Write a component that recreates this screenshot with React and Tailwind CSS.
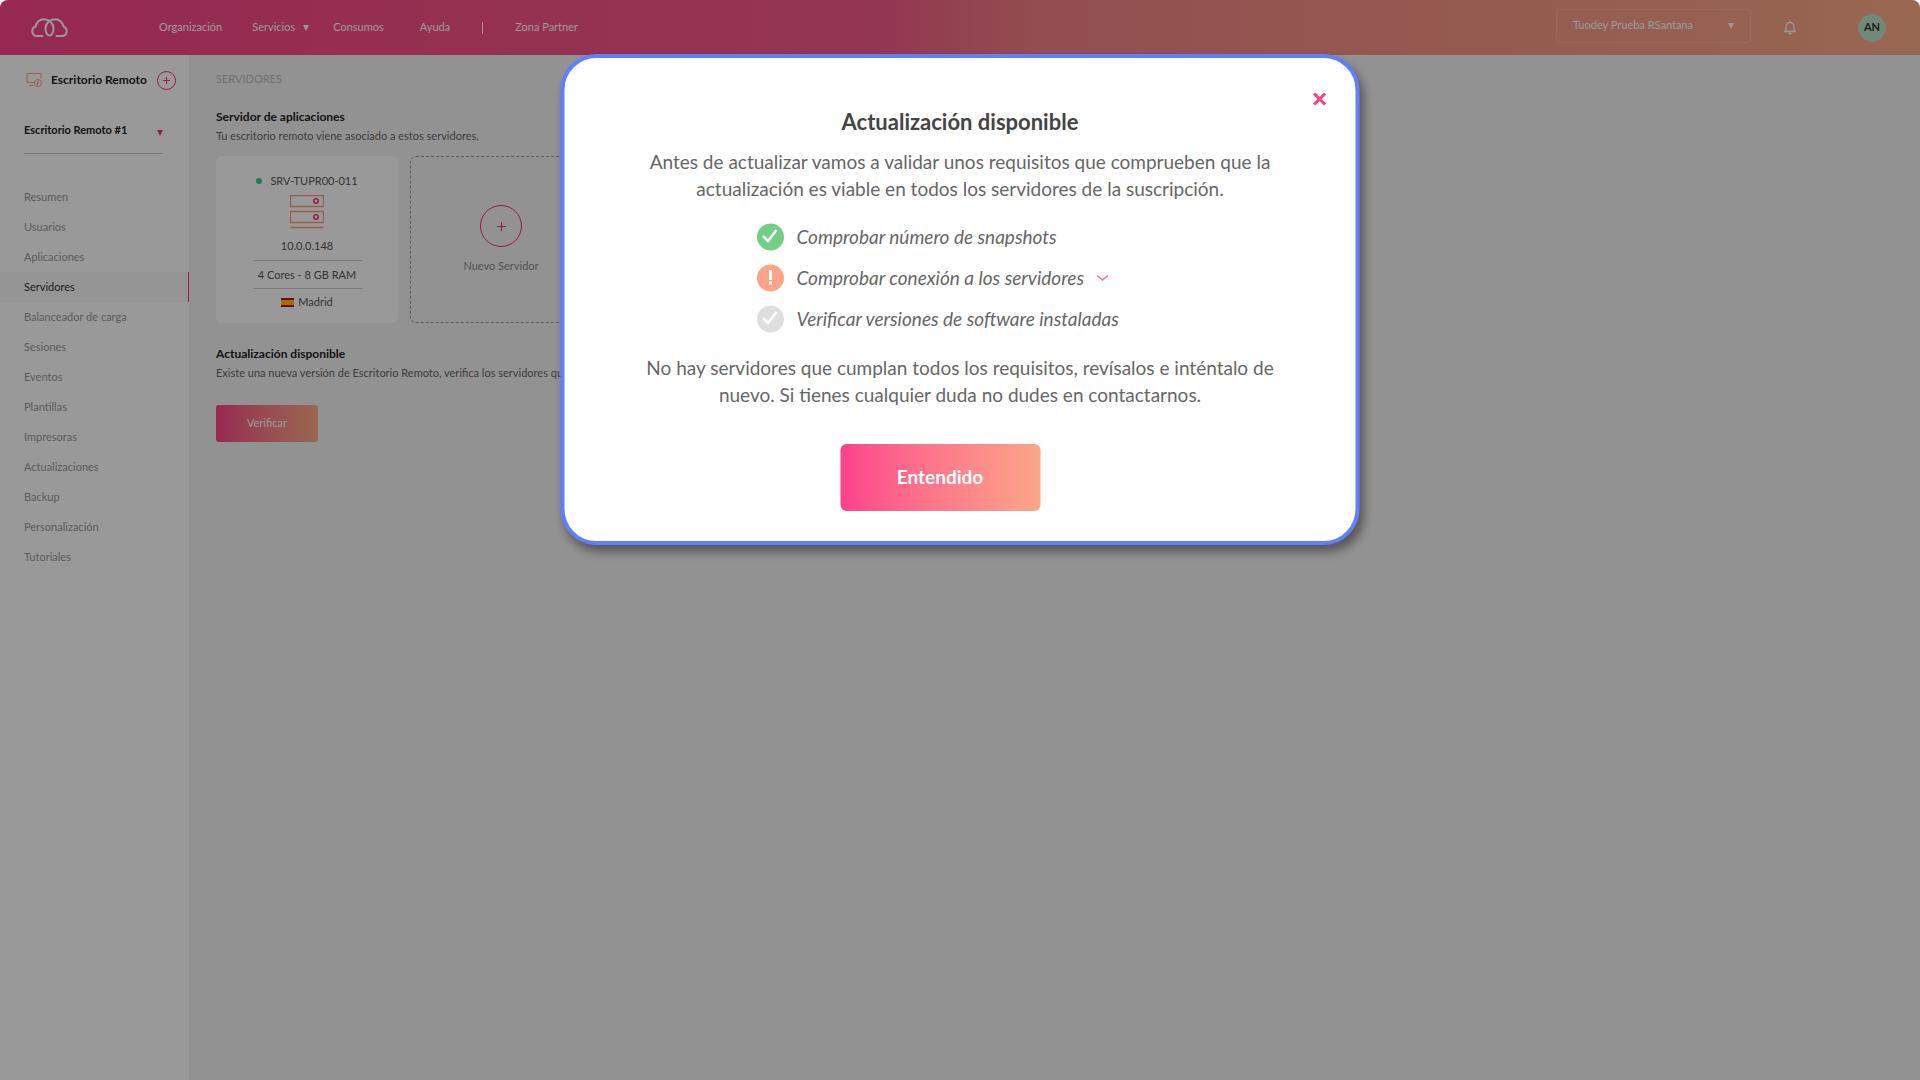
import clsx from 'clsx';

const NAV = [
  { label: 'Resumen' },
  { label: 'Usuarios' },
  { label: 'Aplicaciones' },
  { label: 'Servidores', active: true },
  { label: 'Balanceador de carga' },
  { label: 'Sesiones' },
  { label: 'Eventos' },
  { label: 'Plantillas' },
  { label: 'Impresoras' },
  { label: 'Actualizaciones' },
  { label: 'Backup' },
  { label: 'Personalización' },
  { label: 'Tutoriales' },
];

function Caret({ className }) {
  return (
    <svg viewBox="0 0 6 6" className={clsx('w-[6px] h-[6px] fill-current', className)}>
      <path d="M0 0h6L3 6z" />
    </svg>
  );
}

function CloudLogo() {
  return (
    <svg viewBox="0 0 39 20" className="w-[39px] h-5 fill-none stroke-white" strokeWidth="2" strokeLinecap="round">
      <path d="M12.500 18H6A5 5 0 0 1 5.500 8.500C6.500 4.500 9.500 1.500 14 1.300c5.500 0 9.500 4 9.500 9.200 0 4-1.800 7-4 7s-4-3-4-7c0-5.200 4-9.200 9.500-9.200 4.500.2 7.500 3.200 8.500 7.200A5 5 0 0 1 33 18H26.500" />
    </svg>
  );
}

function DesktopIcon() {
  return (
    <svg viewBox="0 0 17 15" className="w-[17px] h-[15px] fill-none stroke-[#fc9c84]">
      <path d="M9 9.500H1v-9h14v5M3 12.500h5" />
      <circle cx="12" cy="10" r="3.500" />
      <path d="M12 8v2l-1 2" className="stroke-[#fb6a8a]" />
    </svg>
  );
}

function ServerIcon() {
  return (
    <svg viewBox="0 0 34 34" className="w-[34px] h-[34px] fill-none stroke-[#fc9c7c]">
      <path d="M.5.500h33v11H.500zM.5 16.500h33v11H.500zM.5 32.500h33" strokeWidth="1.300" />
      <circle cx="26" cy="6" r="2.200" className="stroke-[#fb2f73]" strokeWidth="1.500" />
      <circle cx="26" cy="22" r="2.200" className="stroke-[#fb2f73]" strokeWidth="1.500" />
    </svg>
  );
}

function BellIcon() {
  return (
    <svg viewBox="0 0 14 15" className="w-[14px] h-[15px] fill-none stroke-white" strokeWidth="1.300">
      <path d="M1 11.500h12M3 11.500V6.500a4 4 0 0 1 8 0v5M7 .5v2M5.500 13.500h3" />
    </svg>
  );
}

function SpainFlag() {
  return (
    <svg viewBox="0 0 13 9" className="w-[13px] h-[9px]">
      <path fill="#c60b1e" d="M0 0h13v9H0z" />
      <path fill="#ffc400" d="M0 2h13v5H0z" />
    </svg>
  );
}

function StatusIcon({ kind }) {
  return (
    <svg viewBox="0 0 28 28" className="w-7 h-7 fill-none stroke-white" strokeWidth="2.500">
      <circle
        cx="14"
        cy="14"
        r="13.500"
        stroke="none"
        fill={kind === 'ok' ? '#71cf86' : kind === 'warn' ? '#fba488' : '#dedede'}
      />
      {kind === 'warn' ? <path d="M14 6v10M14 17.500v3" strokeWidth="3" /> : <path d="M6.500 13l5 5 8.500-11" />}
    </svg>
  );
}

function Header() {
  return (
    <header className="flex h-[55px] items-center bg-[linear-gradient(90deg,#fb4487,#f75c89_46%,#f58285_54%,#fdac88)] text-[11px] text-white">
      <a href="#" aria-label="Inicio" className="ml-[30px]">
        <CloudLogo />
      </a>
      <nav className="ml-[90px] flex items-center">
        <a href="#">Organización</a>
        <a href="#" className="ml-[30px] flex items-center gap-2">
          Servicios <Caret />
        </a>
        <a href="#" className="ml-6">Consumos</a>
        <a href="#" className="ml-9">Ayuda</a>
        <span className="mx-8 h-3 w-px bg-white" />
        <a href="#">Zona Partner</a>
      </nav>
      <div className="ml-auto flex items-center">
        <button className="-mt-1 flex h-[34px] w-[195px] items-center justify-between rounded-sm border border-white/20 px-4">
          Tuodey Prueba RSantana <Caret />
        </button>
        <button aria-label="Notificaciones" className="ml-8">
          <BellIcon />
        </button>
        <span className="mr-[34px] ml-[61px] flex h-7 w-7 items-center justify-center rounded-full bg-[#bce4c8] font-bold text-[#333]">
          AN
        </span>
      </div>
    </header>
  );
}

function Sidebar() {
  return (
    <aside className="w-[189px] shrink-0 bg-white">
      <div className="flex h-[50px] items-center pl-[26px]">
        <DesktopIcon />
        <h2 className="ml-2 text-xs font-bold text-[#222]">Escritorio Remoto</h2>
        <button aria-label="Añadir" className="ml-[10px] flex h-[19px] w-[19px] items-center justify-center rounded-full border border-[#fb2f73] text-[#fb2f73]">
          <svg viewBox="0 0 7 7" className="h-[7px] w-[7px] stroke-current">
            <path d="M3.500 0v7M0 3.500h7" />
          </svg>
        </button>
      </div>
      <button className="mt-[10px] ml-6 flex h-[39px] w-[139px] items-start justify-between border-b border-[#ccc] pt-[7px] text-[11px] font-bold text-[#222]">
        Escritorio Remoto #1
        <span className="pt-2 text-[#fb2f73]">
          <Caret />
        </span>
      </button>
      <nav className="mt-7 text-[11px] text-[#999]">
        {NAV.map((item) => (
          <a
            key={item.label}
            href="#"
            className={clsx(
              'flex h-[30px] items-center pl-6',
              item.active && 'border-r border-[#fb2f73] bg-[#f8f8f8] text-[#333]'
            )}
          >
            {item.label}
          </a>
        ))}
      </nav>
    </aside>
  );
}

function ServerCard() {
  return (
    <div className="flex h-[167px] w-[182px] flex-col items-center rounded-md bg-white pt-[17px] text-[11px] leading-4 text-[#555]">
      <p className="flex items-center gap-2">
        <span className="h-[6px] w-[6px] rounded-full bg-[#45ca85]" /> SRV-TUPR00-011
      </p>
      <div className="mt-[6px]">
        <ServerIcon />
      </div>
      <p className="mt-[9px]">10.0.0.148</p>
      <p className="mt-[6px] flex h-[29px] w-[109px] items-center justify-center border-y border-[#ccc] whitespace-nowrap">
        4 Cores - 8 GB RAM
      </p>
      <p className="mt-[5px] flex items-center gap-1">
        <SpainFlag /> Madrid
      </p>
    </div>
  );
}

function Main() {
  return (
    <main className="flex-1 pt-4 pl-[27px] text-[11px] leading-4 text-[#666]">
      <p className="text-[#bbb]">SERVIDORES</p>
      <h1 className="mt-[22px] text-xs font-bold text-[#222]">Servidor de aplicaciones</h1>
      <p className="mt-[3px]">Tu escritorio remoto viene asociado a estos servidores.</p>
      <div className="mt-3 flex gap-3">
        <ServerCard />
        <button className="flex h-[167px] w-[182px] flex-col items-center rounded-md border border-dashed border-[#999] pt-12 text-[#888]">
          <span className="flex h-[42px] w-[42px] items-center justify-center rounded-full border border-[#fb2f73] text-[#fb2f73]">
            <svg viewBox="0 0 9 9" className="h-[9px] w-[9px] stroke-current">
              <path d="M4.500 0v9M0 4.500h9" />
            </svg>
          </span>
          <span className="mt-[11px]">Nuevo Servidor</span>
        </button>
      </div>
      <h2 className="mt-[23px] text-xs font-bold text-[#222]">Actualización disponible</h2>
      <p className="mt-[3px]">
        Existe una nueva versión de Escritorio Remoto, verifica los servidores que se pueden actualizar.
      </p>
      <button className="mt-6 h-[37px] w-[102px] rounded-[3px] bg-linear-to-r from-[#fb4487] to-[#fdac88] pb-[2px] text-white">
        Verificar
      </button>
    </main>
  );
}

function CheckRow({ kind, children }) {
  return (
    <li className="flex h-[41px] items-center gap-3">
      <StatusIcon kind={kind} />
      {children}
    </li>
  );
}

function UpdateDialog() {
  return (
    <div
      role="dialog"
      aria-labelledby="update-title"
      className="absolute top-[54px] left-1/2 w-[799px] -translate-x-1/2 rounded-[36px] border-4 border-[#5f80fb] bg-white px-20 pt-[50px] pb-[30px] text-center text-[19px] leading-[27px] text-[#666] shadow-[4px_7px_10px_rgba(0,0,0,0.4)]"
    >
      <button aria-label="Cerrar" className="absolute top-[34px] right-[29px] text-[#fb4080]">
        <svg viewBox="0 0 14 14" className="h-[14px] w-[14px] stroke-current" strokeWidth="3">
          <path d="M1.500 1.500l11 11M12.500 1.500l-11 11" />
        </svg>
      </button>
      <h2 id="update-title" className="text-[22px] font-bold text-[#444]">Actualización disponible</h2>
      <p className="mt-[13px]">
        Antes de actualizar vamos a validar unos requisitos que comprueben que la
        <br />
        actualización es viable en todos los servidores de la suscripción.
      </p>
      <ul className="mt-[14px] ml-28 italic">
        <CheckRow kind="ok">Comprobar número de snapshots</CheckRow>
        <CheckRow kind="warn">
          Comprobar conexión a los servidores
          <svg viewBox="0 0 12 6" className="h-[6px] w-3 fill-none stroke-[#fb6ea0]" strokeWidth="1.500">
            <path d="M.5.500L6 5 11.500.500" />
          </svg>
        </CheckRow>
        <CheckRow kind="off">Verificar versiones de software instaladas</CheckRow>
      </ul>
      <p className="mt-[15px]">
        No hay servidores que cumplan todos los requisitos, revísalos e inténtalo de
        <br />
        nuevo. Si tienes cualquier duda no dudes en contactarnos.
      </p>
      <button className="mt-9 mr-10 h-[67px] w-[200px] rounded-md bg-linear-to-r from-[#fb418b] to-[#fba688] pb-[2px] font-bold text-white">
        Entendido
      </button>
    </div>
  );
}

export default function App() {
  return (
    <div className="bg-white font-['Lato',sans-serif]">
      <div className="relative flex min-h-screen flex-col overflow-hidden rounded-t-lg bg-[#f4f4f4]">
        <Header />
        <div className="flex flex-1">
          <Sidebar />
          <Main />
        </div>
        <div className="absolute inset-0 bg-black/40" />
        <UpdateDialog />
      </div>
    </div>
  );
}
